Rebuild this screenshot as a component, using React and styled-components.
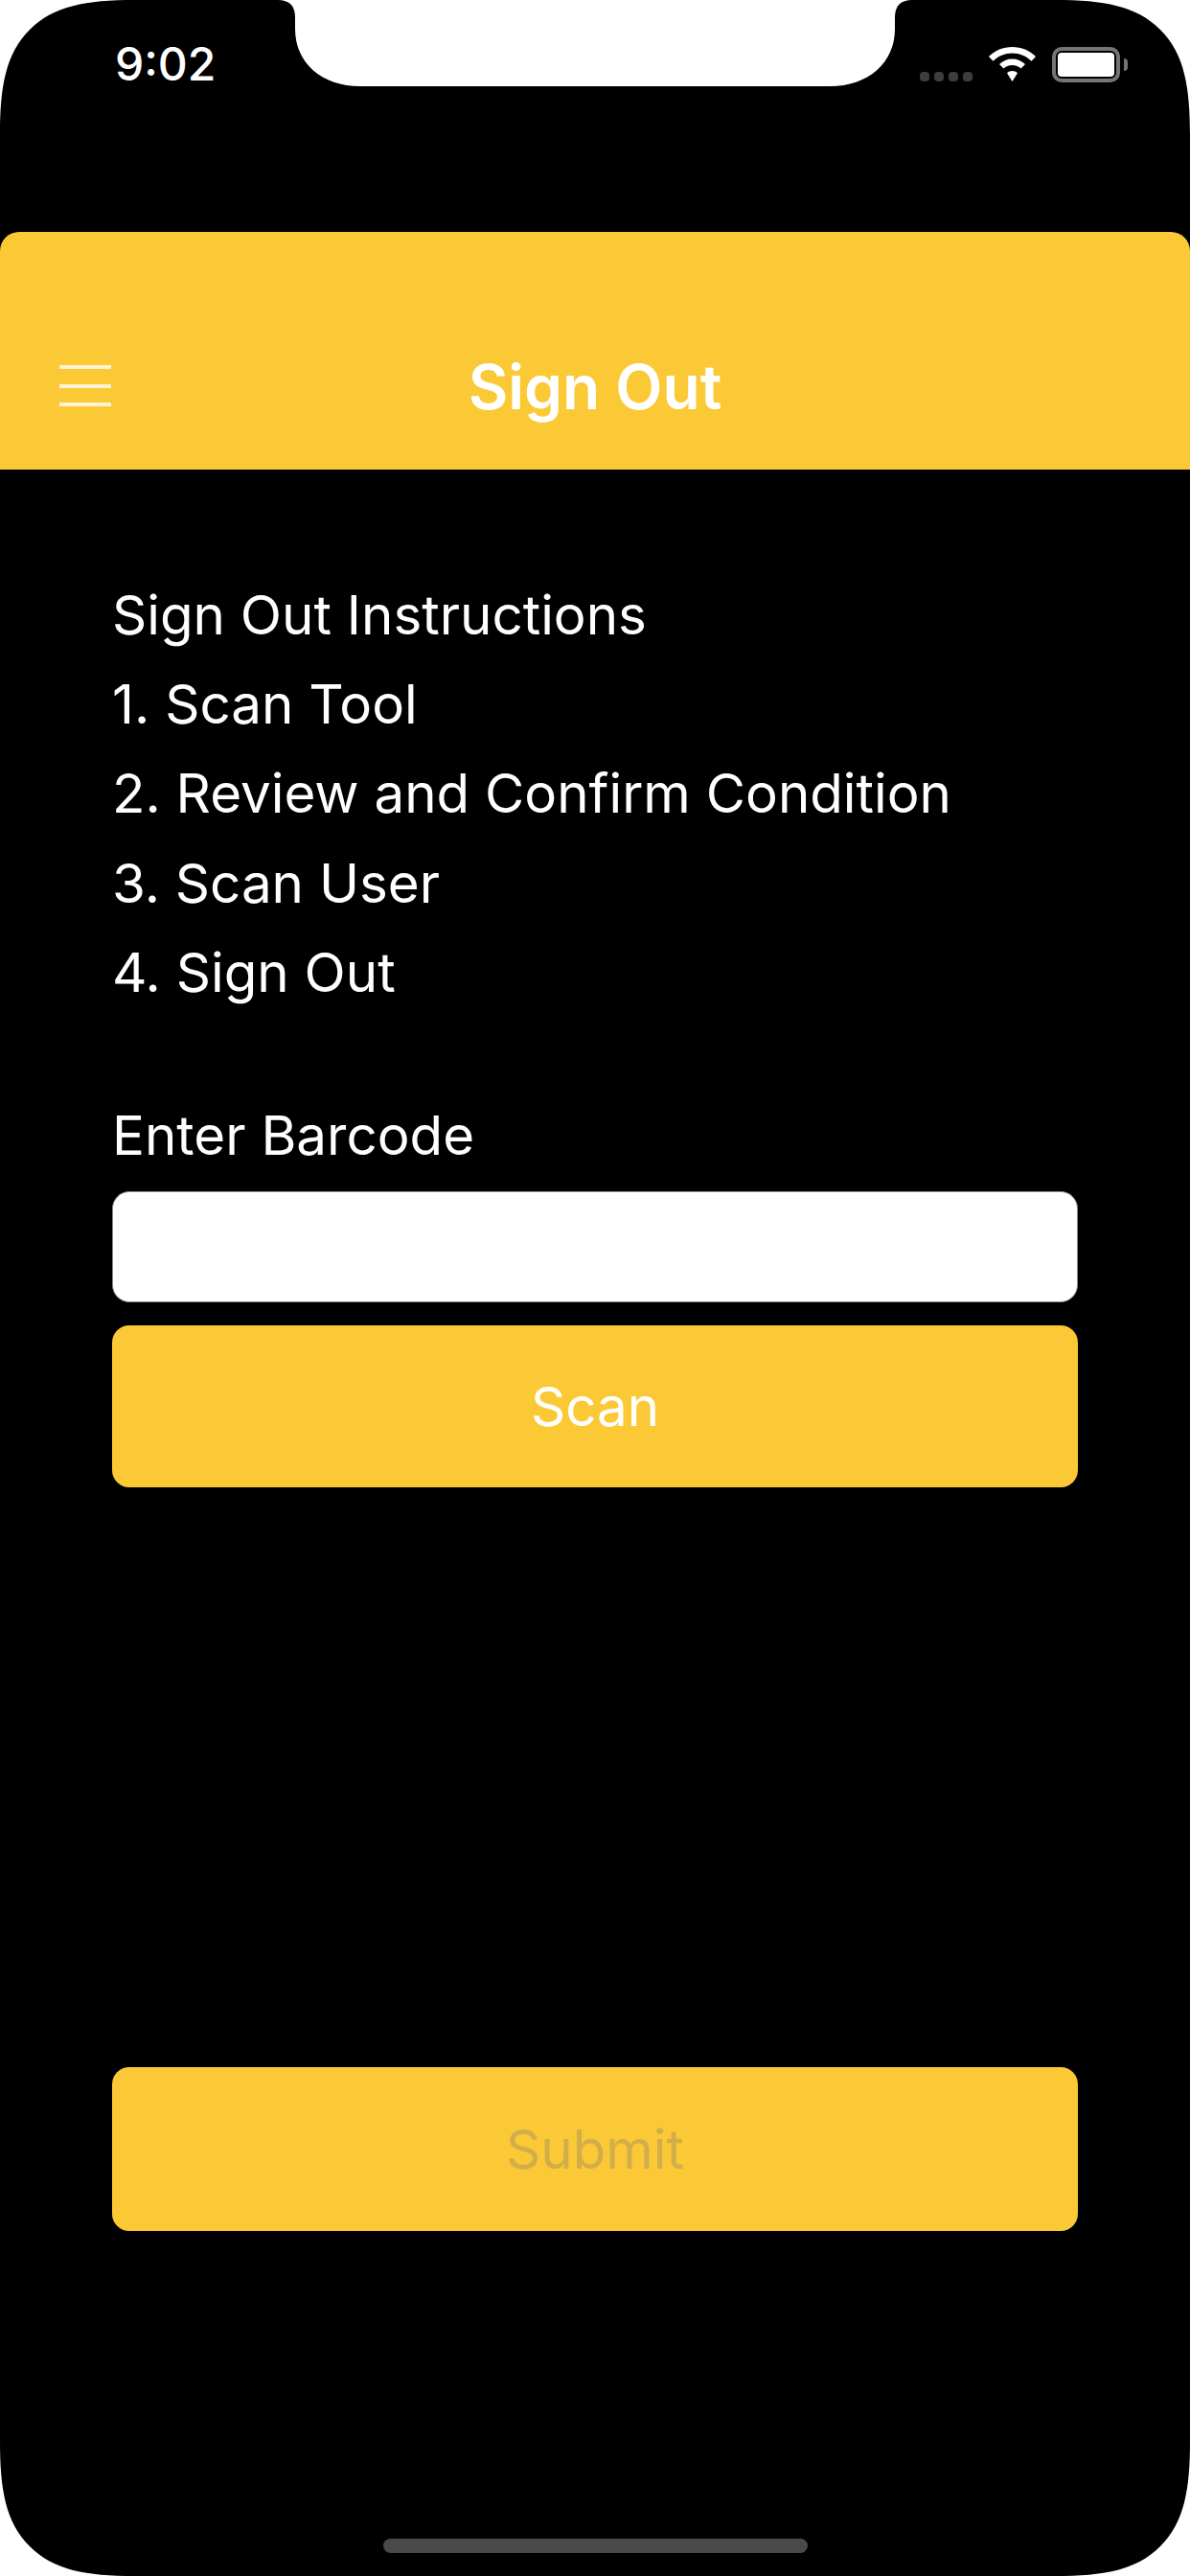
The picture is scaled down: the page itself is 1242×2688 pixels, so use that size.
import styled, { createGlobalStyle } from 'styled-components';

const GlobalStyle = createGlobalStyle`
    html, body {
        margin: 0;
        padding: 0;
        background-color: white;
    }
`

const steps = [
    "Sign Out Instructions",
    "1. Scan Tool",
    "2. Review and Confirm Condition",
    "3. Scan User",
    "4. Sign Out"
];

function Corner({ side }) {
    return (
        <CornerShape side={side} viewBox="0 0 140 140">
            <path d="M0 0H140C90 0 56 6 31 31C6 56 0 90 0 140Z" fill="white" />
        </CornerShape>
    )
}

function Notch() {
    return (
        <NotchShape viewBox="0 0 662 90">
            <path d="M0 0C12 0 18 6 18 18V30C18 66 46 90 86 90H576C616 90 644 66 644 30V18C644 6 650 0 662 0Z" fill="white" />
        </NotchShape>
    )
}

function WifiIcon() {
    return (
        <svg width="49" height="36" viewBox="0 0 49 36">
            <path d="M24.5 0C34 0 42.500 3.600 49 10L44.500 14.700C39.200 9.600 32.200 6.500 24.500 6.500C16.800 6.500 9.800 9.600 4.500 14.700L0 10C6.500 3.600 15 0 24.500 0Z" fill="white" />
            <path d="M24.500 12.500C29.700 12.500 34.400 14.500 38 18L33.500 22.600C31.200 20.300 28 19 24.500 19C21 19 17.800 20.300 15.500 22.600L11 18C14.600 14.500 19.300 12.500 24.500 12.500Z" fill="white" />
            <path d="M24.500 25C26.700 25 28.600 25.900 30 27.200L24.500 36L19 27.200C20.400 25.900 22.300 25 24.500 25Z" fill="white" />
        </svg>
    )
}

export default function App() {
    return (
        <>
            <GlobalStyle />
            <Screen>
                <Corner side="top-left" />
                <Corner side="top-right" />
                <Corner side="bottom-left" />
                <Corner side="bottom-right" />
                <Notch />
                <StatusBar>
                    <Time>9:02</Time>
                    <StatusIcons>
                        <Signal>
                            <Dot /><Dot /><Dot /><Dot />
                        </Signal>
                        <WifiIcon />
                        <Battery>
                            <BatteryLevel />
                        </Battery>
                        <BatteryCap />
                    </StatusIcons>
                </StatusBar>
                <Header>
                    <Hamburger>
                        <Line /><Line /><Line />
                    </Hamburger>
                    <Title>Sign Out</Title>
                </Header>
                <Content>
                    <Instructions>
                        {steps.map(step => <P key={step}>{step}</P>)}
                    </Instructions>
                    <Label htmlFor="barcode">Enter Barcode</Label>
                    <Input id="barcode" />
                    <Button>Scan</Button>
                    <SubmitButton disabled>Submit</SubmitButton>
                </Content>
                <HomeIndicator />
            </Screen>
        </>
    )
}

const Screen = styled.div`
    position: relative;
    width: 1242px;
    height: 2688px;
    background-color: black;
    overflow: hidden;
    display: flex;
    flex-direction: column;
    font-family: Inter, "Liberation Sans", sans-serif;
    color: white;
`
const CornerShape = styled.svg`
    position: absolute;
    width: 140px;
    height: 140px;
    top: ${props => props.side.startsWith("top") ? "0" : "auto"};
    bottom: ${props => props.side.startsWith("bottom") ? "0" : "auto"};
    left: ${props => props.side.endsWith("left") ? "0" : "auto"};
    right: ${props => props.side.endsWith("right") ? "0" : "auto"};
    transform: scale(${props => props.side.endsWith("left") ? 1 : -1}, ${props => props.side.startsWith("top") ? 1 : -1});
`
const NotchShape = styled.svg`
    position: absolute;
    top: 0;
    left: 290px;
    width: 662px;
    height: 90px;
`
const StatusBar = styled.div`
    height: 242px;
    flex-shrink: 0;
    box-sizing: border-box;
    padding: 49px 65px 0 120px;
    display: flex;
    justify-content: space-between;
    align-items: flex-start;
`
const Time = styled.div`
    font-size: 48px;
    font-weight: 500;
    line-height: 36px;
`
const StatusIcons = styled.div`
    display: flex;
    align-items: flex-start;
`
const Signal = styled.div`
    display: flex;
    gap: 5px;
    margin: 26px 17px 0 0;
`
const Dot = styled.div`
    width: 10px;
    height: 10px;
    border-radius: 4px;
    background-color: #3d3d3d;
`
const Battery = styled.div`
    width: 71px;
    height: 37px;
    box-sizing: border-box;
    margin-left: 17px;
    padding: 2px;
    border: 4px solid #757575;
    border-radius: 10px;
    background-color: black;
`
const BatteryLevel = styled.div`
    width: 100%;
    height: 100%;
    border-radius: 4px;
    background-color: white;
`
const BatteryCap = styled.div`
    width: 4px;
    height: 13px;
    margin: 12px 0 0 4px;
    border-radius: 0 4px 4px 0;
    background-color: #757575;
`
const Header = styled.header`
    height: 248px;
    flex-shrink: 0;
    box-sizing: border-box;
    padding: 0 62px 50px;
    border-radius: 20px 20px 0 0;
    background-color: #fbc935;
    display: grid;
    grid-template-columns: 1fr auto 1fr;
    align-items: end;
`
const Hamburger = styled.div`
    width: 54px;
    display: flex;
    flex-direction: column;
    gap: 15.5px;
    margin-bottom: 16px;
`
const Line = styled.div`
    height: 4px;
    background-color: #fef3d2;
`
const Title = styled.h1`
    margin: 0;
    font-size: 64px;
    font-weight: 600;
    line-height: 72px;
`
const Content = styled.main`
    flex: 1;
    box-sizing: border-box;
    padding: 105px 117px 0;
    display: flex;
    flex-direction: column;
    font-weight: 380;
`
const Instructions = styled.div`
    margin-bottom: 90px;
`
const P = styled.p`
    margin: 0;
    font-size: 56.5px;
    line-height: 93.2px;
`
const Label = styled.label`
    font-size: 56.5px;
    line-height: 68px;
    margin-bottom: 24px;
`
const Input = styled.input`
    height: 116px;
    flex-shrink: 0;
    box-sizing: border-box;
    border: 1px solid #8a8a8a;
    border-radius: 18px;
    background-color: white;
`
const Button = styled.button`
    height: 169px;
    flex-shrink: 0;
    margin-top: 24px;
    border: none;
    border-radius: 18px;
    background-color: #fbc935;
    color: white;
    font-family: inherit;
    font-size: 56.5px;
    font-weight: 380;
`
const SubmitButton = styled(Button)`
    margin-top: 605px;
    height: 171px;
    color: #d2ae4a;
`
const HomeIndicator = styled.div`
    position: absolute;
    left: 400px;
    bottom: 24px;
    width: 443px;
    height: 15px;
    border-radius: 8px;
    background-color: #4a4a4a;
`
